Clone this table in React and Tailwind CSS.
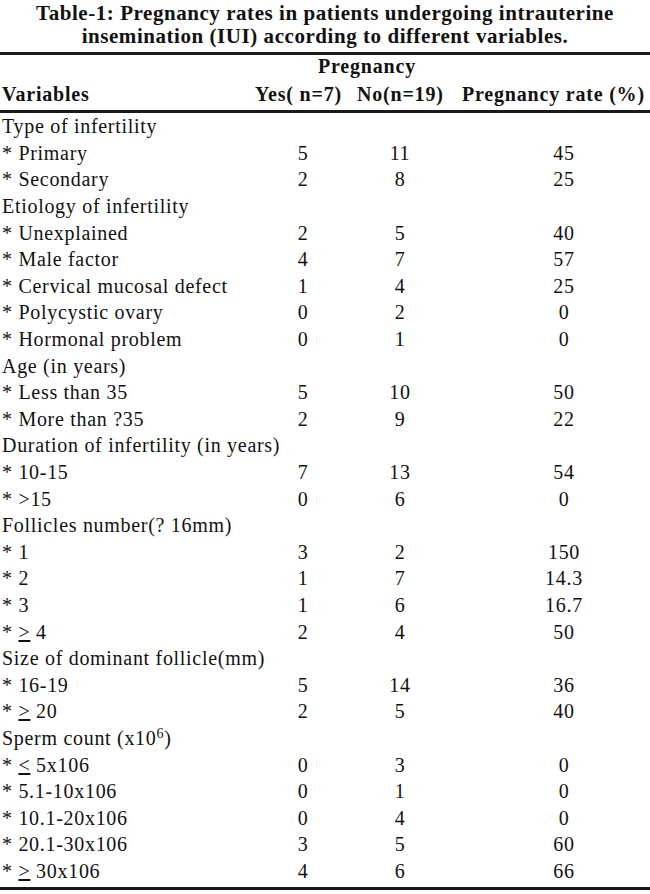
const rows = [
  { label: "Type of infertility", head: true },
  { label: "* Primary", v: ["5", "11", "45"] },
  { label: "* Secondary", v: ["2", "8", "25"] },
  { label: "Etiology of infertility", head: true },
  { label: "* Unexplained", v: ["2", "5", "40"] },
  { label: "* Male factor", v: ["4", "7", "57"] },
  { label: "* Cervical mucosal defect", v: ["1", "4", "25"] },
  { label: "* Polycystic ovary", v: ["0", "2", "0"] },
  { label: "* Hormonal problem", v: ["0", "1", "0"] },
  { label: "Age (in years)", head: true },
  { label: "* Less than 35", v: ["5", "10", "50"] },
  { label: "* More than ?35", v: ["2", "9", "22"] },
  { label: "Duration of infertility (in years)", head: true },
  { label: "* 10-15", v: ["7", "13", "54"] },
  { label: "* >15", v: ["0", "6", "0"] },
  { label: "Follicles number(? 16mm)", head: true },
  { label: "* 1", v: ["3", "2", "150"] },
  { label: "* 2", v: ["1", "7", "14.3"] },
  { label: "* 3", v: ["1", "6", "16.7"] },
  { label: <>* <u>&gt;</u> 4</>, v: ["2", "4", "50"] },
  { label: "Size of dominant follicle(mm)", head: true },
  { label: "* 16-19", v: ["5", "14", "36"] },
  { label: <>* <u>&gt;</u> 20</>, v: ["2", "5", "40"] },
  { label: <>Sperm count (x10<sup className="text-[14px]">6</sup>)</>, head: true },
  { label: <>* <u>&lt;</u> 5x106</>, v: ["0", "3", "0"] },
  { label: "* 5.1-10x106", v: ["0", "1", "0"] },
  { label: "* 10.1-20x106", v: ["0", "4", "0"] },
  { label: "* 20.1-30x106", v: ["3", "5", "60"] },
  { label: <>* <u>&gt;</u> 30x106</>, v: ["4", "6", "66"] },
];

function Row({ row }) {
  return (
    <div className="flex items-center h-[26.6px]">
      <div className="w-[255px] pl-[2px] whitespace-nowrap">{row.label}</div>
      {row.v && (
        <>
          <div className="w-[96px] text-center">{row.v[0]}</div>
          <div className="w-[98px] text-center">{row.v[1]}</div>
          <div className="w-[130px] ml-[50px] text-center">{row.v[2]}</div>
        </>
      )}
    </div>
  );
}

export default function App() {
  return (
    <div className="w-[650px] h-[894px] bg-white text-[#111] font-['Liberation_Serif',serif] overflow-hidden">
      <div className="pt-[2px] text-center font-bold text-[21px] leading-[23px] tracking-[0.55px] whitespace-nowrap">
        <div>Table-1: Pregnancy rates in patients undergoing intrauterine</div>
        <div>insemination (IUI) according to different variables.</div>
      </div>
      <div className="mt-[4px] h-[3px] bg-[#1a1a1a]" />
      <div className="font-bold text-[20px] tracking-[0.8px] whitespace-nowrap">
        <div className="h-[26px] flex items-end pl-[318px]">Pregnancy</div>
        <div className="h-[26px] flex items-center">
          <div className="w-[255px] pl-[2px]">Variables</div>
          <div className="w-[102px]">Yes( n=7)</div>
          <div className="w-[105px]">No(n=19)</div>
          <div>Pregnancy rate (%)</div>
        </div>
      </div>
      <div className="mt-[3px] h-[3px] bg-[#1a1a1a]" />
      <div className="text-[20px] tracking-[0.7px]">
        {rows.map((r, i) => (
          <Row key={i} row={r} />
        ))}
      </div>
      <div className="mt-[3px] h-[3px] bg-[#1a1a1a]" />
    </div>
  );
}
